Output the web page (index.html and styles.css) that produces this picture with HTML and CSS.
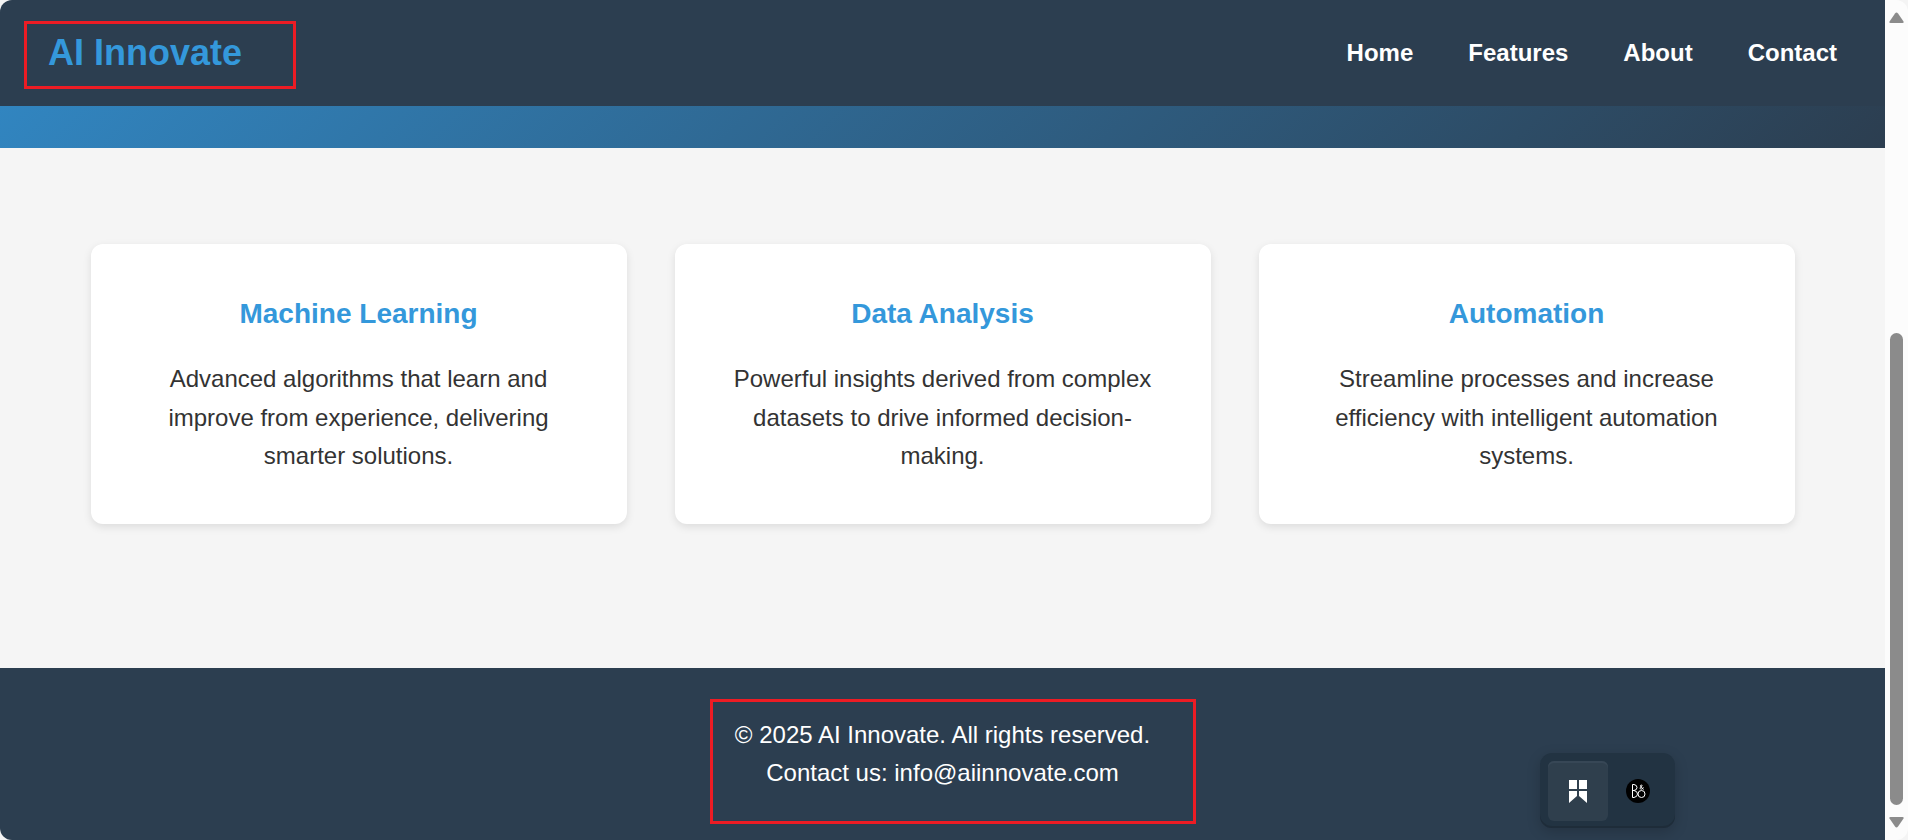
FILE: index.html
```html
<!DOCTYPE html>
<html lang="en">
<head>
<meta charset="utf-8">
<title>AI Innovate</title>
<link rel="stylesheet" href="styles.css">
</head>
<body>
<div class="window">
  <div class="page">
    <header class="header">
      <div class="logo">AI Innovate</div>
      <nav>
        <ul class="nav-list">
          <li><a href="#home">Home</a></li>
          <li><a href="#features">Features</a></li>
          <li><a href="#about">About</a></li>
          <li><a href="#contact">Contact</a></li>
        </ul>
      </nav>
      <div class="mark mark-logo"></div>
    </header>
    <div class="hero"></div>
    <main class="features" id="features">
      <section class="card">
        <h3>Machine Learning</h3>
        <p>Advanced algorithms that learn and improve from experience, delivering smarter solutions.</p>
      </section>
      <section class="card">
        <h3>Data Analysis</h3>
        <p>Powerful insights derived from complex datasets to drive informed decision-making.</p>
      </section>
      <section class="card">
        <h3>Automation</h3>
        <p>Streamline processes and increase efficiency with intelligent automation systems.</p>
      </section>
    </main>
    <footer class="footer" id="contact">
      <p>© 2025 AI Innovate. All rights reserved.</p>
      <p>Contact us: info@aiinnovate.com</p>
      <div class="mark mark-footer"></div>
    </footer>
    <div class="dock">
      <button class="dock-button dock-active" type="button" aria-label="Bookmarks">
        <svg width="18" height="23" viewBox="0 0 18 23" fill="#fff"><path d="M0 0h8v9H0zM10 0h8v9h-8zM0 11h8v5l-8 7zM10 11h8v12l-8-7z"/></svg>
      </button>
      <button class="dock-button" type="button" aria-label="Audio">
        <svg width="24" height="24" viewBox="0 0 24 24" fill="none" stroke="#fff" stroke-width="1"><circle cx="12" cy="12" r="12" fill="#000" stroke="none"/><path d="M6.500 5.500v13M6.500 5.500h1.500q3 .5 3 3t-3 3h-1.500M8 11.500q3.500.7 3.500 3.500t-3.500 3.500h-1.500"/><circle cx="15.500" cy="15" r="3.500"/><path d="M17.500 10.500l-3-3.300c-.6-1.300 1.800-1.700 1.600-.3-.2.900-2.200 1-2 2.400.2 1.300 2.500 1.200 3.400-.8"/></svg>
      </button>
    </div>
  </div>
  <div class="scrollbar" aria-hidden="true">
    <svg width="15" height="12" viewBox="0 0 15 12"><path d="M6 1.500q1.500-2 3 0l5.500 8q.6 1.500-1 1.500H1.500q-1.600 0-1-1.500z" fill="#8b8b8b"/></svg>
    <div class="rail"><div class="thumb"></div></div>
    <svg width="15" height="12" viewBox="0 0 15 12"><path d="M6 10.500q1.500 2 3 0l5.500-8q.6-1.500-1-1.500H1.500q-1.600 0-1 1.500z" fill="#8b8b8b"/></svg>
  </div>
</div>
</body>
</html>
```
FILE: styles.css
```css
* {
  box-sizing: border-box;
  margin: 0;
  padding: 0;
}

body {
  background: #f4f4f4;
  color: #333;
  font: 24px/1.6 "Liberation Sans", Arial, sans-serif;
}

.window {
  display: flex;
  min-height: 100vh;
  overflow: hidden;
  border-radius: 12px;
}

.page {
  position: relative;
  display: flex;
  flex: 1;
  flex-direction: column;
  background: #f5f5f5;
}

.header {
  position: relative;
  display: flex;
  align-items: center;
  justify-content: space-between;
  padding: 24px 48px;
  background: #2c3e50;
}

.logo {
  color: #3498db;
  font-size: 36px;
  font-weight: bold;
}

.nav-list {
  display: flex;
  gap: 55px;
  list-style: none;
}

.nav-list a {
  color: #fff;
  font-weight: bold;
  text-decoration: none;
}

.hero {
  height: 42px;
  background: linear-gradient(135deg, #3185c0, #2c3e50);
}

.features {
  display: grid;
  flex: 1;
  grid-template-columns: repeat(3, 1fr);
  gap: 48px;
  align-items: start;
  width: 100%;
  max-width: 1704px;
  margin: 0 auto;
  padding: 96px 0 144px;
}

.card {
  padding: 48px;
  border-radius: 12px;
  background: #fff;
  box-shadow: 0 3px 8px rgba(0, 0, 0, 0.1);
  text-align: center;
}

.card h3 {
  margin-bottom: 24px;
  color: #3498db;
  font-size: 28px;
}

.footer {
  position: relative;
  padding: 48px;
  background: #2c3e50;
  color: #fff;
  text-align: center;
}

.mark {
  position: absolute;
  border: 3px solid #ed1c24;
}

.mark-logo {
  top: 21px;
  left: 24px;
  width: 272px;
  height: 68px;
}

.mark-footer {
  top: 31px;
  left: 710px;
  width: 486px;
  height: 125px;
}

.dock {
  position: absolute;
  right: 210px;
  bottom: 12px;
  display: flex;
  padding: 8px 7px 7px 8px;
  border-radius: 12px;
  background: #223342;
  box-shadow: inset 0 -2px 0 #1e2c39, 0 4px 14px rgba(0, 0, 0, 0.18);
}

.dock-button {
  display: flex;
  align-items: center;
  justify-content: center;
  width: 60px;
  height: 60px;
  border: 0;
  border-radius: 6px;
  background: none;
}

.dock-active {
  background: #2f3f4d;
  box-shadow: inset 0 2px 0 #374756;
}

.scrollbar {
  display: flex;
  flex-direction: column;
  align-items: center;
  width: 23px;
  padding: 12px 0;
  background: #fcfcfc;
}

.rail {
  flex: 1;
  width: 13px;
  padding-top: 309px;
  padding-bottom: 11px;
}

.thumb {
  height: 100%;
  border-radius: 7px;
  background: #8b8b8b;
}
```
